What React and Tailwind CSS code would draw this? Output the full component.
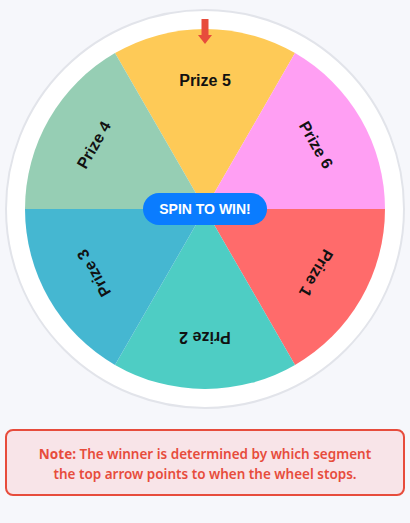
import React from "react";

const segments = [
  { label: "Prize 5", color: "#FECA57", d: "M180 180 L90 24.115 A180 180 0 0 1 270 24.115 Z", angle: 0 },
  { label: "Prize 6", color: "#FF9FF3", d: "M180 180 L270 24.115 A180 180 0 0 1 360 180 Z", angle: 60 },
  { label: "Prize 1", color: "#FF6B6B", d: "M180 180 L360 180 A180 180 0 0 1 270 335.885 Z", angle: 120 },
  { label: "Prize 2", color: "#4ECDC4", d: "M180 180 L270 335.885 A180 180 0 0 1 90 335.885 Z", angle: 180 },
  { label: "Prize 3", color: "#45B7D1", d: "M180 180 L90 335.885 A180 180 0 0 1 0 180 Z", angle: 240 },
  { label: "Prize 4", color: "#96CEB4", d: "M180 180 L0 180 A180 180 0 0 1 90 24.115 Z", angle: 300 },
];

const Wheel = () => {
  return (
    <div className="relative w-[400px] h-[400px] rounded-full bg-white border-2 border-[#e2e4ea] flex items-center justify-center">
      <svg width="360" height="360" viewBox="0 0 360 360">
        {segments.map((s) => (
          <path key={s.label} d={s.d} fill={s.color} />
        ))}
        {segments.map((s) => (
          <text
            key={s.label + "-t"}
            x="180"
            y="53"
            textAnchor="middle"
            dominantBaseline="middle"
            fontFamily="'Liberation Sans', Arial, sans-serif"
            fontWeight="700"
            fontSize="16"
            fill="#111"
            transform={`rotate(${s.angle} 180 180)`}
          >
            {s.label}
          </text>
        ))}
      </svg>
      <svg
        className="absolute left-[191px] top-[8px]"
        width="14"
        height="26"
        viewBox="0 0 14 26"
      >
        <rect x="3.5" y="0" width="7" height="17" fill="#E74C3C" />
        <path d="M0 16 L14 16 L7 25 Z" fill="#E74C3C" />
      </svg>
      <button className="absolute left-[136px] top-[182px] w-[124px] h-[32px] rounded-full bg-[#0a7cff] text-white text-[14px] font-bold font-['Liberation_Sans',Arial,sans-serif]">
        SPIN TO WIN!
      </button>
    </div>
  );
};

const App = () => {
  return (
    <div className="w-[410px] h-[523px] bg-[#f6f7fb] flex flex-col items-center pt-[9px]">
      <Wheel />
      <div className="mt-[20px] w-[400px] rounded-lg border-2 border-[#e74c3c] bg-[#f8e4e8] px-[28px] pt-[13px] pb-[10px] text-center text-[13.5px] leading-[20px] text-[#e74c3c] font-['Noto_Sans',sans-serif] font-semibold">
        <span className="font-bold">Note:</span> The winner is determined by which segment the top arrow points to when the wheel stops.
      </div>
    </div>
  );
};

export default App;
